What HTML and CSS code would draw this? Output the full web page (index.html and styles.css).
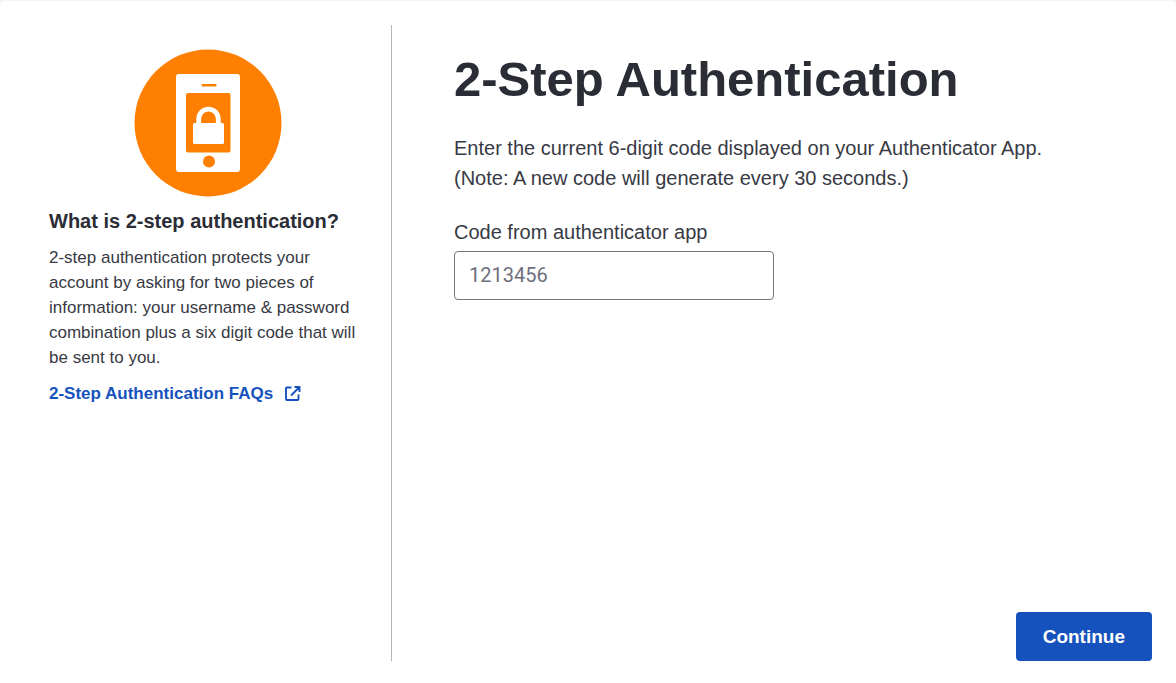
FILE: index.html
```html
<!DOCTYPE html>
<html lang="en">
<head>
<meta charset="utf-8">
<meta name="viewport" content="width=device-width, initial-scale=1">
<title>2-Step Authentication</title>
<link rel="stylesheet" href="styles.css">
</head>
<body>
<div class="dialog">
  <aside class="info">
    <svg class="info-icon" viewBox="0 0 148 148" aria-hidden="true">
      <circle cx="74" cy="74" r="73.5" fill="#ff8000"/>
      <rect x="42" y="25" width="64" height="98" rx="3" fill="#fff"/>
      <rect x="67.500" y="35" width="15" height="2.5" rx="1" fill="#ff8000"/>
      <rect x="52" y="44" width="44.500" height="59.500" rx="2" fill="#ff8000"/>
      <rect x="59" y="74" width="31" height="21" rx="1.500" fill="#fff"/>
      <path d="M64.700 75v-5a9.800 9.800 0 0 1 19.600 0v5" fill="none" stroke="#fff" stroke-width="4.800"/>
      <circle cx="75" cy="112.500" r="6" fill="#ff8000"/>
    </svg>
    <h2 class="info-title">What is 2-step authentication?</h2>
    <p class="info-text">2-step authentication protects your account by asking for two pieces of information: your username &amp; password combination plus a six digit code that will be sent to you.</p>
    <a class="info-link" href="#faqs">2-Step Authentication FAQs
      <svg class="link-icon" viewBox="0 0 16 16" aria-hidden="true">
        <path d="M6.500 1.500H2Q1 1.500 1 2.500V13Q1 14 2 14H12.500Q13.500 14 13.500 13V8.500M9.500 1H14.500V6M14.500 1L6 9.500" fill="none" stroke="currentColor" stroke-width="1.900"/>
      </svg>
    </a>
  </aside>
  <form class="main">
    <h1 class="title">2-Step Authentication</h1>
    <p class="lead">Enter the current 6-digit code displayed on your Authenticator App.<br>(Note: A new code will generate every 30 seconds.)</p>
    <label class="label" for="code">Code from authenticator app</label>
    <input class="field" id="code" type="text" inputmode="numeric" placeholder="1213456">
    <button class="button" type="button">Continue</button>
  </form>
</div>
</body>
</html>
```
FILE: styles.css
```css
* {
  box-sizing: border-box;
}

body {
  margin: 0;
  background: #f4f4f5;
  color: #2b2d36;
  font-family: "Liberation Sans", Arial, sans-serif;
}

h1, h2, p {
  margin: 0;
}

.dialog {
  display: flex;
  min-height: 100vh;
  padding: 24px 24px 22px 49px;
  border-top: 1px solid #f4f4f5;
  border-radius: 5px 5px 0 0;
  background: #fff;
}

.info {
  display: flex;
  flex: 0 0 343px;
  flex-direction: column;
  align-items: flex-start;
  padding: 24px 24px 0 0;
  border-right: 1px solid #b1b5bd;
}

.info-icon {
  align-self: center;
  width: 148px;
  height: 148px;
}

.info-title {
  margin-top: 8px;
  font-size: 20px;
  line-height: 32px;
}

.info-text {
  margin-top: 8px;
  color: #383a44;
  font-size: 17px;
  line-height: 25px;
}

.info-link {
  display: inline-flex;
  gap: 12px;
  align-items: center;
  margin-top: 12px;
  color: #1652bd;
  font-size: 17px;
  font-weight: bold;
  line-height: 24px;
  text-decoration: none;
}

.link-icon {
  width: 16px;
  height: 16px;
}

.main {
  display: flex;
  flex: 1;
  flex-direction: column;
  align-items: flex-start;
  min-width: 0;
  padding: 24px 0 0 62px;
}

.title {
  font-size: 49px;
  line-height: 60px;
}

.lead {
  margin-top: 24px;
  color: #383a44;
  font-size: 20px;
  line-height: 30px;
}

.label {
  margin-top: 24px;
  color: #383a44;
  font-size: 20px;
  line-height: 30px;
}

.field {
  width: 100%;
  max-width: 320px;
  height: 49px;
  margin-top: 4px;
  padding: 0 14px 2px;
  border: 1px solid #747681;
  border-radius: 4px;
  background: #fff;
  color: #2b2d36;
  font-family: Roboto, sans-serif;
  font-size: 20px;
}

.field::placeholder {
  color: #6d707c;
  opacity: 1;
}

.button {
  height: 49px;
  margin-top: auto;
  margin-left: auto;
  padding: 0 27px;
  border: 0;
  border-radius: 4px;
  background: #1652bd;
  color: #fff;
  font-family: inherit;
  font-size: 19px;
  font-weight: bold;
}
```
